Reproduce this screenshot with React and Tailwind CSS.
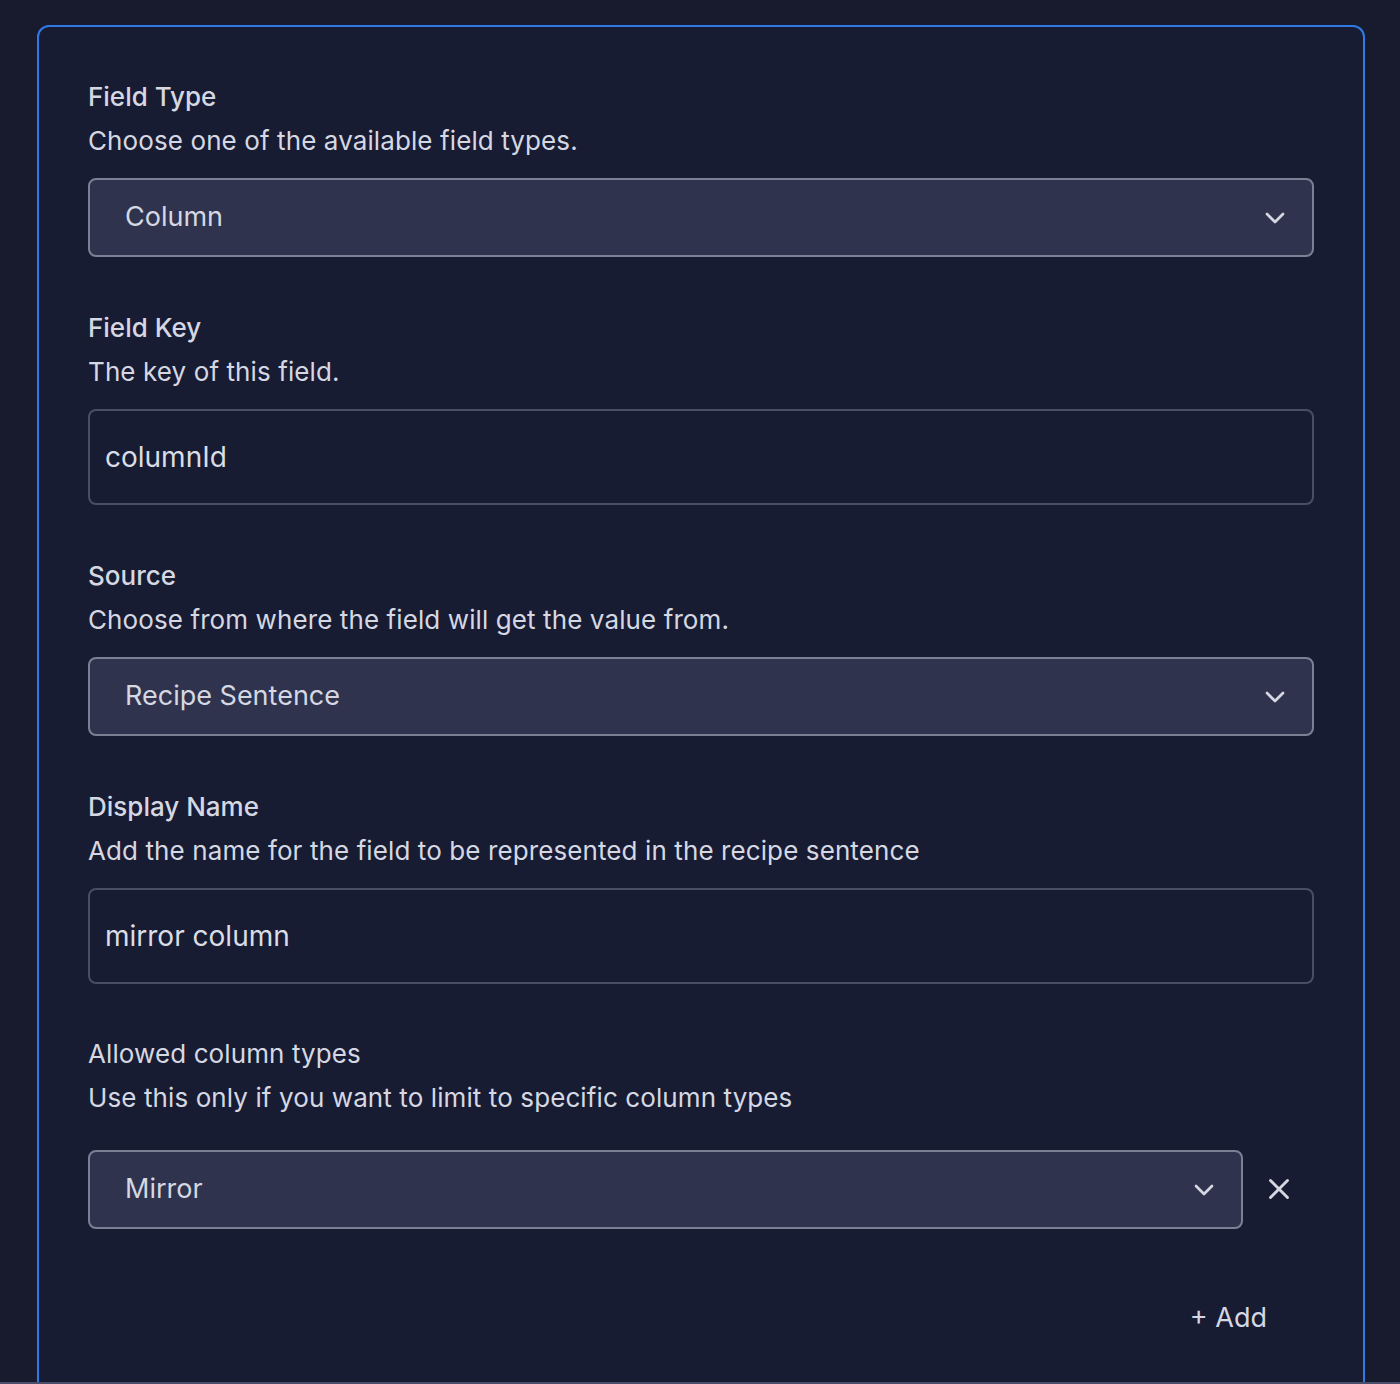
import React from "react";
import { ChevronDown, X } from "lucide-react";

const font = { fontFamily: "Inter, 'Noto Sans', sans-serif" };

const labelCls = "text-[26px] leading-[44px] font-medium text-[#d5d8e2]";
const descCls = "text-[26px] leading-[44px] tracking-[0.1px] text-[#d5d8e2]";

function Select({ value, className = "" }) {
  return (
    <div className={"h-[79px] flex items-center justify-between bg-[#30334d] border-2 border-[#7c8095] rounded-lg pl-[35px] pr-[21px] " + className}>
      <span className="text-[27px] text-[#d5d8e2]">{value}</span>
      <ChevronDown size={32} strokeWidth={2} className="text-[#d5d8e2]" />
    </div>
  );
}

function Input({ value }) {
  return (
    <div className="h-[96px] flex items-center bg-[#181c33] border-2 border-[#494d66] rounded-lg px-[15px]">
      <span className="text-[28px] text-[#dadde5]">{value}</span>
    </div>
  );
}

function Field({ label, desc, children, light }) {
  return (
    <div>
      <div className={light ? descCls : labelCls}>{label}</div>
      <div className={descCls}>{desc}</div>
      {children}
    </div>
  );
}

export default function App() {
  return (
    <div style={font} className="w-[1400px] h-[1384px] overflow-hidden bg-[#181b2e] flex flex-col">
      <div className="flex-1 overflow-hidden pt-[25px] pl-[37px] pr-[35px]">
        <div className="border-2 border-[#2f7ae5] rounded-t-xl bg-[#181c33] h-[1400px] px-[49px] pt-[48px]">
          <div className="flex flex-col gap-[49px]">
            <Field label="Field Type" desc="Choose one of the available field types.">
              <Select value="Column" className="mt-[15px]" />
            </Field>
            <Field label="Field Key" desc="The key of this field.">
              <div className="mt-[15px]"><Input value="columnId" /></div>
            </Field>
            <Field label="Source" desc="Choose from where the field will get the value from.">
              <Select value="Recipe Sentence" className="mt-[15px]" />
            </Field>
            <Field label="Display Name" desc="Add the name for the field to be represented in the recipe sentence">
              <div className="mt-[15px]"><Input value="mirror column" /></div>
            </Field>
          </div>
          <div className="mt-[48px]">
            <Field light label="Allowed column types" desc="Use this only if you want to limit to specific column types">
              <div className="mt-[30px] flex items-center">
                <Select value="Mirror" className="w-[1155px]" />
                <button className="ml-[19px] -mt-[2px] text-[#d5d8e2]">
                  <X size={34} strokeWidth={2} />
                </button>
              </div>
            </Field>
            <div className="flex justify-end pr-[47px] mt-[69px]">
              <span className="text-[27px] text-[#d5d8e2]">+ Add</span>
            </div>
          </div>
        </div>
      </div>
      <div className="h-[2px] bg-[#4a4e6a]" />
    </div>
  );
}
